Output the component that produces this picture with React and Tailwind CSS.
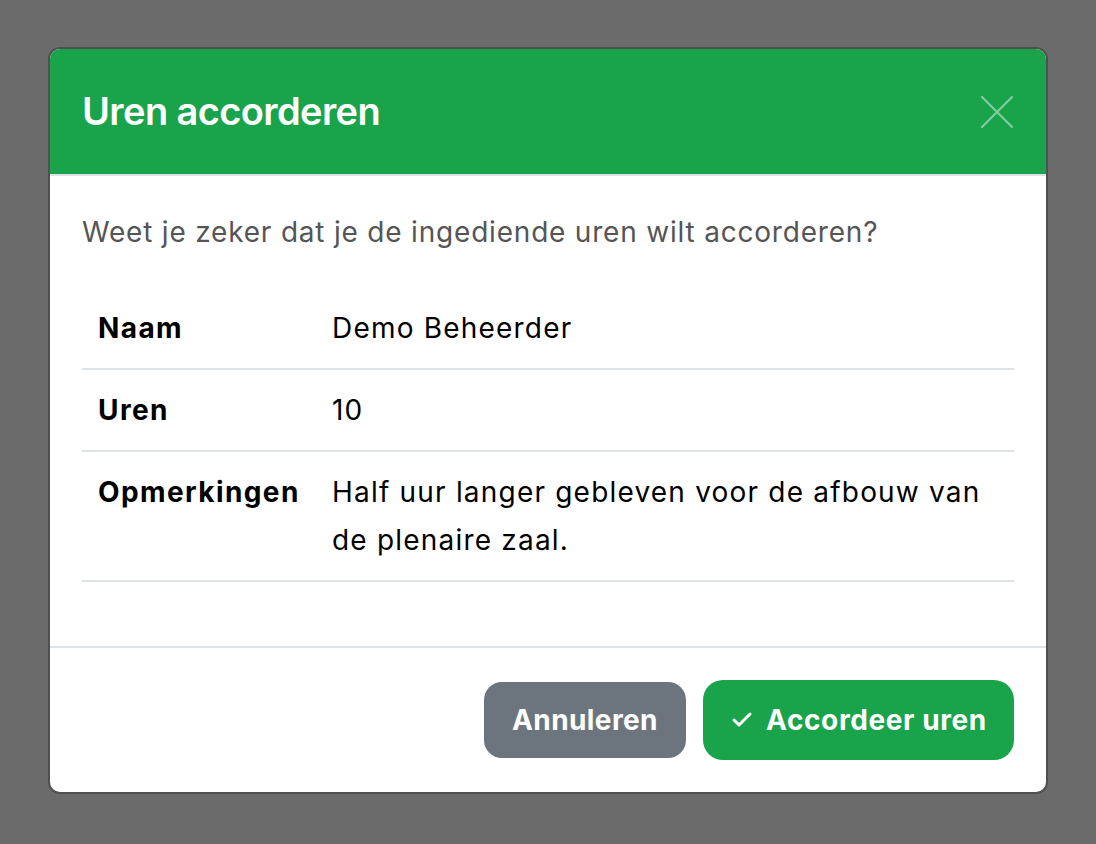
import { Check } from 'lucide-react';

const rows = [
  { label: 'Naam', value: 'Demo Beheerder' },
  { label: 'Uren', value: '10' },
  { label: 'Opmerkingen', value: 'Half uur langer gebleven voor de afbouw van de plenaire zaal.' },
];

export default function App() {
  return (
    <div className="min-h-[844px] bg-[#6b6b6b] pt-[47px] pl-[48px]" style={{ fontFamily: 'Inter, "Noto Sans", sans-serif' }}>
      <div className="w-[1000px] rounded-xl border-2 border-[#505050] bg-white overflow-hidden">
        {/* Header */}
        <div className="flex items-center justify-between h-[127px] bg-[#19a34b] px-[32px] border-b-2 border-[#dee2e6]">
          <h2 className="text-[38px] font-semibold text-white tracking-[-0.6px]">Uren accorderen</h2>
          <button className="text-white/45 mr-[1px]">
            <svg width="32" height="32" viewBox="0 0 32 32" fill="none" stroke="currentColor" strokeWidth="2.2" strokeLinecap="round">
              <path d="M1 1 31 31M31 1 1 31" />
            </svg>
          </button>
        </div>

        {/* Body */}
        <div className="p-[32px] h-[470px]">
          <p className="text-[28px] leading-[48px] text-[#555] tracking-[0.8px]">
            Weet je zeker dat je de ingediende uren wilt accorderen?
          </p>
          <table className="mt-[32px] w-full text-[28px] leading-[48px] text-black">
            <tbody>
              {rows.map(row => (
                <tr key={row.label} className="border-b-2 border-[#dee2e6] align-top">
                  <th className="w-[234px] px-[16px] py-[16px] text-left font-bold tracking-[1.4px]">{row.label}</th>
                  <td className="px-[16px] py-[16px] tracking-[1.2px]">{row.value}</td>
                </tr>
              ))}
            </tbody>
          </table>
        </div>

        {/* Footer */}
        <div className="flex items-center justify-end gap-[17px] h-[146px] px-[32px] border-t-2 border-[#dee2e6]">
          <button className="h-[76px] w-[202px] rounded-[18px] bg-[#6c757d] text-white text-[28px] font-bold tracking-[0.4px]">
            Annuleren
          </button>
          <button className="flex items-center justify-center gap-[12px] h-[80px] w-[311px] rounded-[20px] bg-[#19a34b] text-white text-[28px] font-bold tracking-[0.6px]">
            <Check size={24} strokeWidth={3} />
            Accordeer uren
          </button>
        </div>
      </div>
    </div>
  );
}
